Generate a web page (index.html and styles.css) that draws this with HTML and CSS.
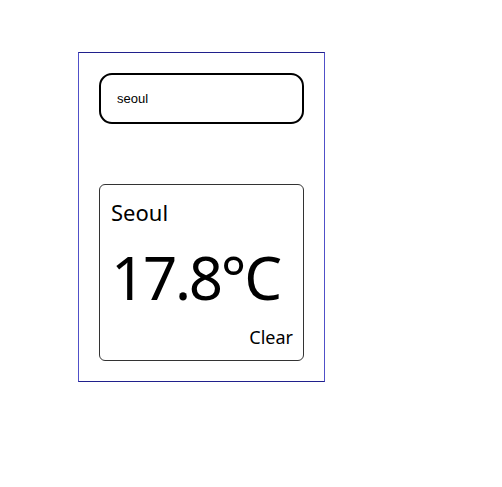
FILE: index.html
```html
<!DOCTYPE html>
<html>
<head>
<meta charset="utf-8">
<link rel="stylesheet" href="styles.css">
</head>
<body>
<div class="app">
  <div class="search">seoul</div>
  <div class="card">
    <div class="city">Seoul</div>
    <div class="temp">17.8°C</div>
    <div class="desc">Clear</div>
  </div>
</div>
</body>
</html>
```
FILE: styles.css
```css
html, body { margin: 0; padding: 0; background: #fff; }
body { padding: 52px 0 0 78px; font-family: "Noto Sans", "Open Sans", sans-serif; color: #000; }
.app {
  box-sizing: border-box;
  width: 247px;
  height: 330px;
  border: 1px solid #5050c8;
  border-top-color: #20208c;
  border-bottom-color: #20208c;
  padding: 20px;
  display: flex;
  flex-direction: column;
  gap: 60px;
}
.search {
  box-sizing: border-box;
  width: 205px;
  height: 51px;
  border: 2px solid #000;
  border-radius: 13px;
  font-family: "Liberation Sans", Arial, sans-serif;
  font-size: 13px;
  padding: 0 0 0 16px;
  display: flex;
  align-items: center;
}
.card {
  box-sizing: border-box;
  width: 205px;
  height: 177px;
  border: 1px solid #333;
  border-radius: 6px;
  padding: 13px 10px 10px 11px;
  display: flex;
  flex-direction: column;
}
.city { font-size: 22px; line-height: 28px; }
.temp { font-size: 60px; line-height: 70px; margin-top: 16px; letter-spacing: -2.3px; }
.desc { font-size: 18px; line-height: 24px; text-align: right; margin-top: 13px; margin-right: 0; }
```
